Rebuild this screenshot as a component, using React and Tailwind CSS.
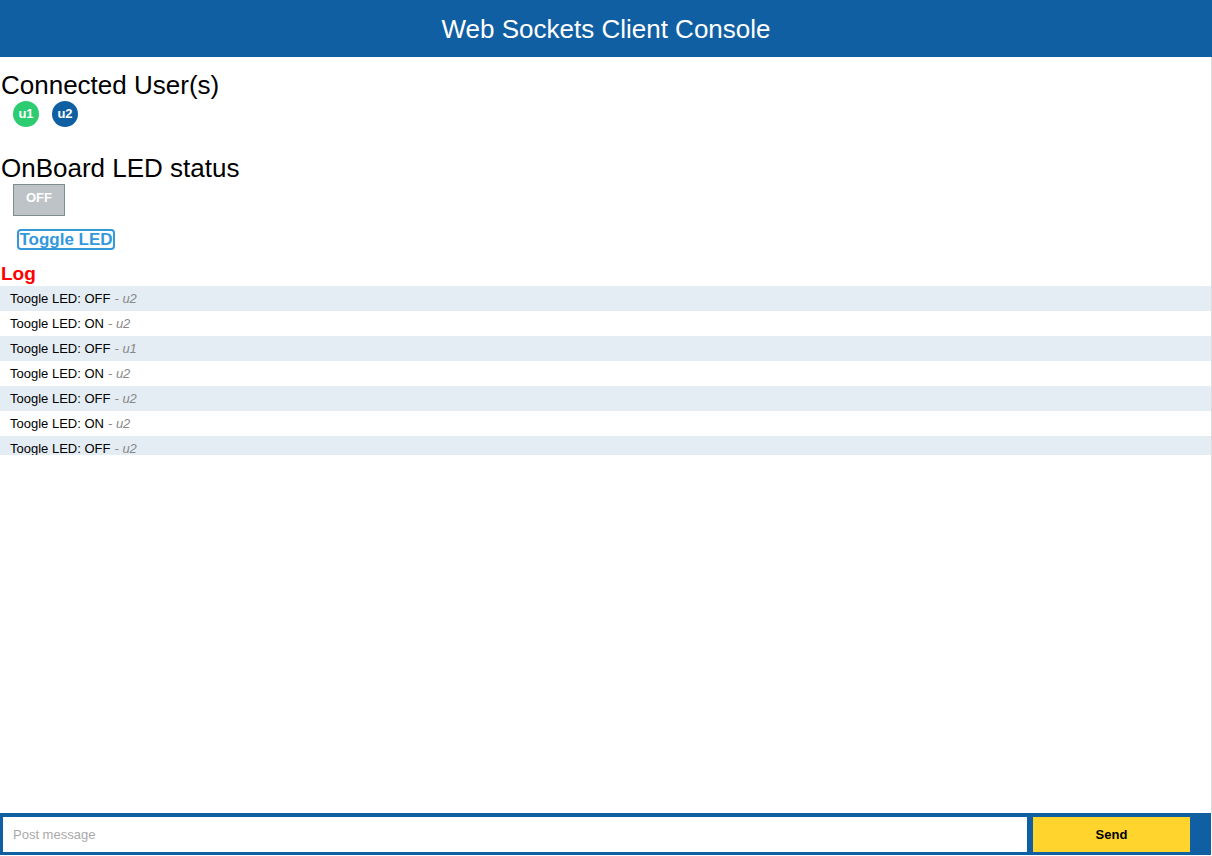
import React from "react";

const logs = [
  { s: "OFF", u: "u2" },
  { s: "ON", u: "u2" },
  { s: "OFF", u: "u1" },
  { s: "ON", u: "u2" },
  { s: "OFF", u: "u2" },
  { s: "ON", u: "u2" },
  { s: "OFF", u: "u2" },
];

export default function App() {
  return (
    <div className="w-[1212px] h-[856px] flex flex-col bg-white text-black overflow-hidden" style={{ fontFamily: '"Liberation Sans", Arial, sans-serif' }}>
      <header className="h-[57px] shrink-0 bg-[#115fa3] flex items-center justify-center">
        <h1 className="text-white text-[26px] leading-none">Web Sockets Client Console</h1>
      </header>
      <main className="flex-1 w-[1212px] border-r border-[#dcdcdc] flex flex-col min-h-0">
        <h2 className="text-[26px] leading-none mt-[15px] ml-[1px]">Connected User(s)</h2>
        <div className="flex gap-[13px] ml-[13px] mt-[3px]">
          <div className="w-[26px] h-[26px] rounded-full bg-[#2ecc71] text-white text-[13px] font-bold flex items-center justify-center">u1</div>
          <div className="w-[26px] h-[26px] rounded-full bg-[#115fa3] text-white text-[13px] font-bold flex items-center justify-center">u2</div>
        </div>
        <h2 className="text-[26px] leading-none mt-[28px] ml-[1px]">OnBoard LED status</h2>
        <div className="ml-[13px] mt-[3px] w-[52px] h-[32px] bg-[#bdc3c7] border border-[#7f8c8d] text-white text-[13px] font-bold flex justify-center pt-[3px]">OFF</div>
        <div className="ml-[17px] mt-[13px] w-[98px] h-[21px] border-2 border-[#3498db] rounded-[4px] text-[#3498db] text-[17px] font-bold flex items-center justify-center leading-none">Toggle LED</div>
        <h3 className="text-[#ff0000] text-[19px] font-bold leading-none mt-[14px] ml-[1px]">Log</h3>
        <div className="mt-[3px] h-[169px] overflow-hidden">
          {logs.map((l, i) => (
            <div key={i} className={`h-[25px] flex items-center pl-[10px] text-[13px] ${i % 2 === 0 ? "bg-[#e4ecf4]" : "bg-white"}`}>
              <span>Toogle LED: {l.s}</span>
              <span className="italic text-[#888888] ml-[4px]">- {l.u}</span>
            </div>
          ))}
        </div>
      </main>
      <footer className="shrink-0 w-[1211px] h-[42px] bg-[#115fa3] flex items-stretch pt-[4px] pb-[3px] pl-[3px] mb-[1px]">
        <div className="w-[1024px] bg-white flex items-center pl-[10px] text-[13px] text-[#a9a9a9]">Post message</div>
        <div className="ml-[6px] w-[157px] bg-[#ffd42d] flex items-center justify-center text-[13px] font-bold">Send</div>
      </footer>
    </div>
  );
}
